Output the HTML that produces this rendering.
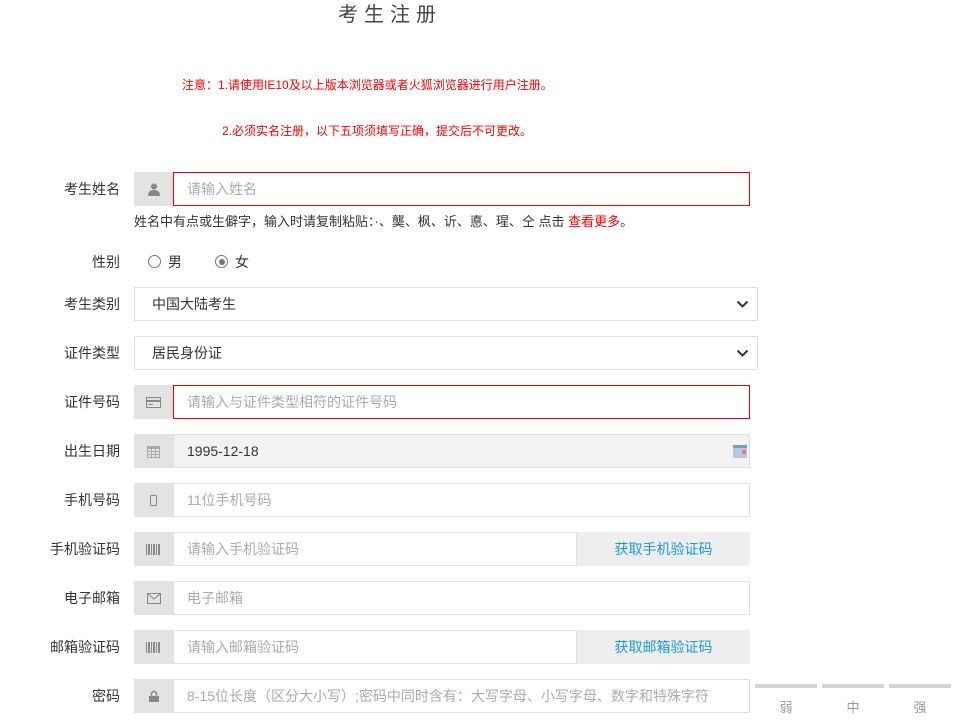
<!DOCTYPE html>
<html><head><meta charset="utf-8"><style>
body{margin:0;width:960px;height:728px;background:#fff;font-family:"Liberation Sans","Noto Sans CJK SC",sans-serif;position:relative;overflow:hidden;color:#333}
.a{position:absolute}
.t{left:0;width:780px;text-align:center;top:-2px;font-size:20px;letter-spacing:6px;color:#444}
.n{font-size:12px;color:#f00}
.l{width:120px;left:0;text-align:right;font-size:14px;color:#333;line-height:34px}
.ic{left:134px;width:39px;height:34px;background:#e3e3e3;display:flex;align-items:center;justify-content:center}
.in{left:173px;width:575px;height:32px;border:1px solid #e0e0e0;font-size:14px;color:#aaa;line-height:32px;padding-left:13px;box-sizing:content-box}
.in.r{border-color:#e00}
.sel{left:134px;width:624px;height:32px;border:1px solid #e0e0e0;font-size:14px;color:#333;line-height:32px;padding-left:17px;box-sizing:border-box;height:34px}
.btn{left:577px;width:173px;height:34px;background:#eee;color:#1a9ad6;font-size:14px;line-height:34px;text-align:center}
.bar{top:684px;width:62px;height:4px;background:#d3d3d3}
.bl{top:697px;width:62px;text-align:center;font-size:13px;color:#999}
</style></head><body>
<div class="a t">考生注册</div>
<div class="a n" style="left:182px;top:76px">注意：1.请使用IE10及以上版本浏览器或者火狐浏览器进行用户注册。</div>
<div class="a n" style="left:222px;top:122px">2.必须实名注册，以下五项须填写正确，提交后不可更改。</div>

<div class="a l" style="top:172px">考生姓名</div>
<div class="a ic" style="top:172px"><svg width="12" height="13" viewBox="0 0 12 13"><circle cx="6" cy="3.5" r="3" fill="#888"/><path d="M0 13 Q0 7 6 7 Q12 7 12 13Z" fill="#888"/></svg></div>
<div class="a in r" style="top:172px;width:562px">请输入姓名</div>
<div class="a" style="left:134px;top:211px;font-size:13px;color:#333">姓名中有点或生僻字，输入时请复制粘贴：·、龑、枫、䜣、悳、瑆、仝 点击 <span style="color:#f00">查看更多</span>。</div>

<div class="a l" style="top:245px">性别</div>
<div class="a" style="left:148px;top:255px;width:11px;height:11px;border:1px solid #777;border-radius:50%"></div>
<div class="a" style="left:168px;top:252px;font-size:14px">男</div>
<div class="a" style="left:215px;top:255px;width:11px;height:11px;border:1px solid #777;border-radius:50%"><div style="margin:2.5px;width:6px;height:6px;border-radius:50%;background:#777"></div></div>
<div class="a" style="left:235px;top:252px;font-size:14px">女</div>

<div class="a l" style="top:287px">考生类别</div>
<div class="a sel" style="top:287px">中国大陆考生<svg class="a" style="right:8px;top:12px" width="13" height="9" viewBox="0 0 13 9"><path d="M1.5 1.5L6.5 6.5L11.5 1.5" stroke="#333" stroke-width="2" fill="none"/></svg></div>
<div class="a l" style="top:336px">证件类型</div>
<div class="a sel" style="top:336px">居民身份证<svg class="a" style="right:8px;top:12px" width="13" height="9" viewBox="0 0 13 9"><path d="M1.5 1.5L6.5 6.5L11.5 1.5" stroke="#333" stroke-width="2" fill="none"/></svg></div>

<div class="a l" style="top:385px">证件号码</div>
<div class="a ic" style="top:385px"><svg width="15" height="11"><rect x=".5" y=".5" width="14" height="10" fill="none" stroke="#888"/><rect x="1" y="3" width="13" height="2" fill="#888"/><rect x="2" y="7" width="5" height="1" fill="#888"/></svg></div>
<div class="a in r" style="top:385px;width:562px">请输入与证件类型相符的证件号码</div>

<div class="a l" style="top:434px">出生日期</div>
<div class="a ic" style="top:434px"><svg width="13" height="13"><rect x="0" y="1" width="13" height="12" fill="#aaa"/><g fill="#e3e3e3"><rect x="1" y="4" width="3" height="2"/><rect x="5" y="4" width="3" height="2"/><rect x="9" y="4" width="3" height="2"/><rect x="1" y="7" width="3" height="2"/><rect x="5" y="7" width="3" height="2"/><rect x="9" y="7" width="3" height="2"/><rect x="1" y="10" width="3" height="2"/><rect x="5" y="10" width="3" height="2"/><rect x="9" y="10" width="3" height="2"/></g></svg></div>
<div class="a in" style="top:434px;width:562px;background:#f2f2f2;color:#333">1995-12-18<svg class="a" style="right:2px;top:10px" width="14" height="13"><rect x="0" y="0" width="14" height="13" fill="#b8c8dc"/><rect x="0" y="0" width="14" height="3" fill="#7a9cc4"/><rect x="9" y="5" width="4" height="4" fill="#e77"/></svg></div>

<div class="a l" style="top:483px">手机号码</div>
<div class="a ic" style="top:483px"><svg width="7" height="11"><rect x=".5" y=".5" width="6" height="10" rx="1" fill="none" stroke="#888"/></svg></div>
<div class="a in" style="top:483px;width:562px">11位手机号码</div>

<div class="a l" style="top:532px">手机验证码</div>
<div class="a ic" style="top:532px"><svg width="15" height="11"><g fill="#888"><rect x="0" width="1" height="11"/><rect x="2" width="2" height="11"/><rect x="5" width="1" height="11"/><rect x="7" width="2" height="11"/><rect x="10" width="1" height="11"/><rect x="12" width="2" height="11"/></g></svg></div>
<div class="a in" style="top:532px;width:389px">请输入手机验证码</div>
<div class="a btn" style="top:532px">获取手机验证码</div>

<div class="a l" style="top:581px">电子邮箱</div>
<div class="a ic" style="top:581px"><svg width="14" height="11"><rect x=".5" y=".5" width="13" height="10" fill="none" stroke="#888"/><path d="M.5 .5L7 6L13.5 .5" fill="none" stroke="#888"/></svg></div>
<div class="a in" style="top:581px;width:562px">电子邮箱</div>

<div class="a l" style="top:630px">邮箱验证码</div>
<div class="a ic" style="top:630px"><svg width="15" height="11"><g fill="#888"><rect x="0" width="1" height="11"/><rect x="2" width="2" height="11"/><rect x="5" width="1" height="11"/><rect x="7" width="2" height="11"/><rect x="10" width="1" height="11"/><rect x="12" width="2" height="11"/></g></svg></div>
<div class="a in" style="top:630px;width:389px">请输入邮箱验证码</div>
<div class="a btn" style="top:630px">获取邮箱验证码</div>

<div class="a l" style="top:679px">密码</div>
<div class="a ic" style="top:679px"><svg width="10" height="12"><path d="M2.5 6V4a2.5 2.5 0 0 1 5 0v2" fill="none" stroke="#888" stroke-width="1.5"/><rect x="0" y="6" width="10" height="6" fill="#888"/></svg></div>
<div class="a in" style="top:679px;width:562px">8-15位长度（区分大小写）;密码中同时含有：大写字母、小写字母、数字和特殊字符</div>
<div class="a bar" style="left:755px"></div><div class="a bar" style="left:822px"></div><div class="a bar" style="left:889px"></div>
<div class="a bl" style="left:755px">弱</div><div class="a bl" style="left:822px">中</div><div class="a bl" style="left:889px">强</div>
</body></html>
